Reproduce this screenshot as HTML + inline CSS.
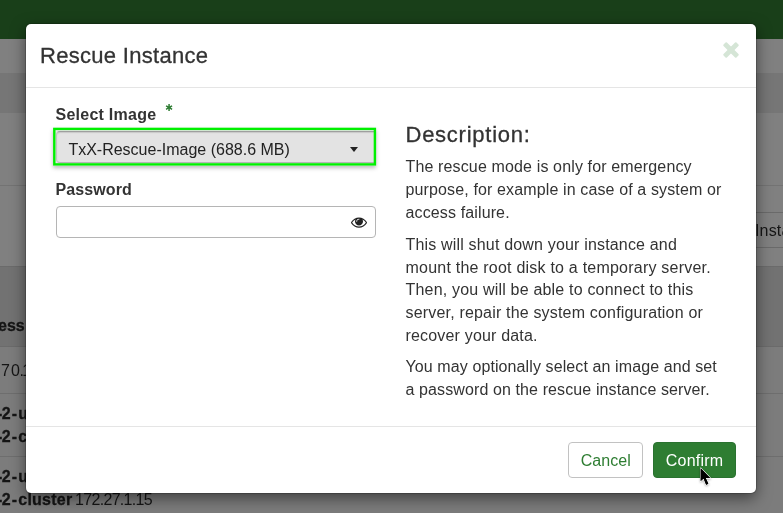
<!DOCTYPE html>
<html lang="en">
<head>
<meta charset="utf-8">
<title>Rescue Instance</title>
<style>
*{box-sizing:border-box;margin:0;padding:0}
html,body{width:783px;height:513px;overflow:hidden;background:#808080}
body{position:relative;font-family:"Liberation Sans",Arial,sans-serif;font-size:16px;line-height:23px;color:#333}
.abs{position:absolute}
#modal,.bgtxt,#bgbtn{will-change:transform}
/* ---------- dimmed page behind the modal ---------- */
#topbar{left:0;top:0;width:783px;height:39px;background:#193f19}
.band{left:0;width:783px}
.hl{left:0;width:783px;height:1px}
.bgtxt{color:#151515;white-space:nowrap;font-size:16px;line-height:23px}
.bgtxt b{font-weight:bold;-webkit-text-stroke:.3px #151515}
.bgtxt .hy{letter-spacing:1.2px}
/* ---------- modal ---------- */
#modal{left:26px;top:24px;width:730px;height:469px;background:#fff;border-radius:5px;
  box-shadow:0 5px 15px rgba(0,0,0,.5),0 0 0 1px rgba(0,0,0,.18)}
#title{-webkit-text-stroke:.3px #333;left:14px;top:14.6px;font-size:22px;line-height:34px;letter-spacing:.3px;color:#333;white-space:nowrap}
#hline{left:0;top:63px;width:730px;height:1px;background:#e5e5e5}
#fline{left:0;top:402px;width:730px;height:1px;background:#e5e5e5}
#close{left:697.1px;top:18px;width:16px;height:16px;overflow:visible}
.lbl{font-weight:bold;font-size:16px;line-height:23px;letter-spacing:.25px;color:#333;white-space:nowrap}
#star{color:#2e7d32;font-family:"DejaVu Sans",sans-serif;font-size:9.5px;line-height:12px}
#selwrap{left:24px;top:101px;width:330px;height:44px}
#selshadow{left:27.2px;top:104px;width:322.8px;height:37.5px;background:#e6e6e6;box-shadow:0 2px 4px rgba(0,0,0,.27)}
#select{left:30px;top:107px;width:319px;height:32px;background:#e3e3e3;border:1px solid;border-color:#9e9e9e #c6c6c6 #b4b4b4 #c2c2c2;border-radius:4px 0 0 4px;box-shadow:inset 0 1px 1px rgba(0,0,0,.12);
  font-size:16px;line-height:30px;padding:3px 0 0 11.4px;color:#222;white-space:nowrap;overflow:hidden}
#caret{left:323.8px;top:123px;width:0;height:0;border-left:4.8px solid transparent;border-right:4.8px solid transparent;border-top:5.1px solid #222}
#pw{left:30px;top:182px;width:320px;height:32px;background:#fff;border:1px solid #b5b5b5;border-radius:4px}
#eye{left:325.2px;top:190.4px;width:16px;height:16px}
#desc h3{-webkit-text-stroke:.3px #333;font-weight:normal;font-size:22px;line-height:28px;letter-spacing:.75px;color:#333;white-space:nowrap}
#desc p{left:0;font-size:16px;line-height:23px;letter-spacing:.11px;color:#333;white-space:nowrap}
.btn{height:36px;border-radius:4px;font-size:16px;line-height:34px;padding-top:1px;letter-spacing:.2px;text-align:center;white-space:nowrap}
#cancel{left:542px;top:418px;width:75px;background:#fff;border:1px solid #c2c2c2;color:#2e7d32;letter-spacing:.05px;padding-left:.5px}
#confirm{left:627px;top:418px;width:83px;background:#2e7d32;border:1px solid #2a7230;color:#fff}
#cursor{left:698px;top:466px;width:16px;height:22px;filter:drop-shadow(0 1px 1px rgba(0,0,0,.3))}
</style>
</head>
<body>
<!-- dimmed background page -->
<div class="abs" id="topbar"></div>
<div class="abs band" style="top:39px;height:34px;background:#808080"></div>
<div class="abs band" style="top:73px;height:40px;background:#767676"></div>
<div class="abs band" style="top:113px;height:153px;background:#808080"></div>
<div class="abs hl" style="top:185px;background:#737373"></div>
<div class="abs hl" style="top:266px;background:#6b6b6b"></div>
<div class="abs band" style="top:267px;height:79px;background:#727272"></div>
<div class="abs hl" style="top:346px;background:#6b6b6b"></div>
<div class="abs band" style="top:347px;height:166px;background:#7c7c7c"></div>
<div class="abs hl" style="top:393px;background:#6e6e6e"></div>
<div class="abs hl" style="top:456px;background:#6e6e6e"></div>
<!-- launch button fragment on the right -->
<div class="abs" style="left:740px;top:212px;width:60px;height:36px;border:1px solid #6a6a6a;background:#808080"></div>
<div class="abs bgtxt" style="left:755px;top:219px;letter-spacing:.15px">Instances</div>
<!-- table text fragments on the left -->
<div class="abs bgtxt" style="left:-58px;top:314px"><b>IP Address</b></div>
<div class="abs bgtxt" style="left:1.2px;top:359px"><span style="letter-spacing:1px">70</span><span style="margin-left:-1.2px;letter-spacing:-1.85px">.</span>1</div>
<div class="abs bgtxt" style="left:-3.5px;top:402px"><b style="letter-spacing:-.7px">-</b><b class="hy">2-</b><b>u</b></div>
<div class="abs bgtxt" style="left:-3.5px;top:425px"><b style="letter-spacing:-.7px">-</b><b class="hy">2-</b><b>c</b></div>
<div class="abs bgtxt" style="left:-3.5px;top:465px"><b style="letter-spacing:-.7px">-</b><b class="hy">2-</b><b>u</b></div>
<div class="abs bgtxt" style="left:-3.5px;top:488px"><b style="letter-spacing:-.7px">-</b><b class="hy">2-</b><b style="letter-spacing:.23px">cluster</b></div>
<div class="abs bgtxt" style="left:75.3px;top:488px;letter-spacing:-.68px">172.27.1.15</div>

<!-- modal dialog -->
<div class="abs" id="modal">
  <div class="abs" id="title">Rescue Instance</div>
  <svg class="abs" id="close" viewBox="0 0 16 16"><g transform="translate(8 8)" fill="#d5e5d6"><rect x="-9.15" y="-2.4" width="18.3" height="4.8" rx="1" transform="rotate(45)"/><rect x="-9.15" y="-2.4" width="18.3" height="4.8" rx="1" transform="rotate(-45)"/></g></svg>
  <div class="abs" id="hline"></div>

  <div class="abs lbl" style="left:29.5px;top:79px">Select Image</div>
  <div class="abs" id="star" style="left:139.3px;top:77.7px">✱</div>
  <div class="abs" id="selshadow"></div>
  <div class="abs" id="select">TxX-Rescue-Image (688.6 MB)</div>
  <div class="abs" id="caret"></div>
  <svg class="abs" id="selwrap" width="330" height="44" viewBox="0 0 330 44"><rect x="4.3" y="3.9" width="320.6" height="35.5" fill="none" stroke="#00f000" stroke-width="2.4"/></svg>

  <div class="abs lbl" style="left:29.5px;top:154px;letter-spacing:.1px">Password</div>
  <div class="abs" id="pw"></div>
  <svg class="abs" id="eye" viewBox="0 0 1792 1792"><path fill="#222" d="M1664 960q-152-236-381-353 61 104 61 225 0 185-131.500 316.500t-316.500 131.500-316.500-131.500-131.500-316.500q0-121 61-225-229 117-381 353 133 205 333.500 326.500t434.500 121.500 434.500-121.500 333.500-326.500zM944 576q0-20-14-34t-34-14q-125 0-214.500 89.500t-89.500 214.500q0 20 14 34t34 14 34-14 14-34q0-86 61-147t147-61q20 0 34-14t14-34zM1792 960q0 34-20 69-140 230-376.500 368.500t-499.500 138.500-499.500-139-376.500-368q-20-35-20-69t20-69q140-229 376.500-368t499.500-139 499.500 139 376.500 368q20 35 20 69z"/></svg>

  <div class="abs" id="desc" style="left:379.5px;top:0">
    <h3 class="abs" style="left:0;top:96.6px">Description:</h3>
    <div class="abs" style="left:0;top:0">
    <p class="abs" style="top:131px;letter-spacing:.14px">The rescue mode is only for emergency</p>
    <p class="abs" style="top:154px;letter-spacing:.13px">purpose, for example in case of a system or</p>
    <p class="abs" style="top:177px;letter-spacing:.13px">access failure.</p>
    <p class="abs" style="top:209px;letter-spacing:.175px">This will shut down your instance and</p>
    <p class="abs" style="top:232px;letter-spacing:.22px">mount the root disk to a temporary server.</p>
    <p class="abs" style="top:254px;letter-spacing:.19px">Then, you will be able to connect to this</p>
    <p class="abs" style="top:277px;letter-spacing:.18px">server, repair the system configuration or</p>
    <p class="abs" style="top:300px;letter-spacing:.18px">recover your data.</p>
    <p class="abs" style="top:331px;letter-spacing:.1px">You may optionally select an image and set</p>
    <p class="abs" style="top:354px;">a password on the rescue instance server.</p>
    </div>
  </div>

  <div class="abs" id="fline"></div>
  <div class="abs btn" id="cancel">Cancel</div>
  <div class="abs btn" id="confirm">Confirm</div>
</div>

<!-- mouse pointer -->
<svg class="abs" id="cursor" viewBox="0 0 16 22"><g transform="translate(2.7 2.2) scale(1.07)"><path d="M0 0 L0 12 L2.7 9.7 L5.1 15.4 L7.1 14.6 L4.7 9.1 L8.8 9.1 Z" fill="#000" stroke="#fff" stroke-width="1.3" stroke-linejoin="round" paint-order="stroke"/><path d="M0 0 L0 12 L2.7 9.7 L5.1 15.4 L7.1 14.6 L4.7 9.1 L8.8 9.1 Z" fill="#000"/></g></svg>
</body>
</html>
